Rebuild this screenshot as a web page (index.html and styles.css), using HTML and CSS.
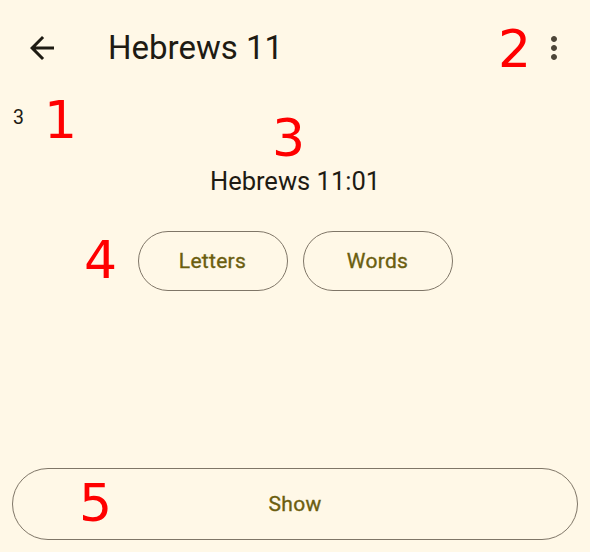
FILE: index.html
```html
<!DOCTYPE html>
<html lang="en">
<head>
<meta charset="utf-8">
<title>Hebrews 11</title>
<link rel="stylesheet" href="styles.css">
</head>
<body>
<div class="screen">
  <header class="topbar">
    <svg class="icon back" viewBox="0 0 24 24" aria-hidden="true"><path d="M20 11H7.83l5.59-5.59L12 4l-8 8 8 8 1.41-1.41L7.83 13H20v-2z"/></svg>
    <h1 class="title">Hebrews 11</h1>
    <svg class="icon more" viewBox="0 0 24 24" aria-hidden="true"><path d="M12 8c1.1 0 2-.9 2-2s-.9-2-2-2-2 .9-2 2 .9 2 2 2zm0 2c-1.1 0-2 .9-2 2s.9 2 2 2 2-.9 2-2-.9-2-2-2zm0 6c-1.1 0-2 .9-2 2s.9 2 2 2 2-.9 2-2-.9-2-2-2z"/></svg>
  </header>
  <main class="content">
    <div class="count">3</div>
    <div class="verse">Hebrews 11:01</div>
    <div class="choices">
      <button class="pill">Letters</button>
      <button class="pill">Words</button>
    </div>
  </main>
  <footer class="footer">
    <button class="pill wide">Show</button>
  </footer>
  <span class="mark m1">1</span>
  <span class="mark m2">2</span>
  <span class="mark m3">3</span>
  <span class="mark m4">4</span>
  <span class="mark m5">5</span>
</div>
</body>
</html>
```
FILE: styles.css
```css
html, body {
  margin: 0;
  padding: 0;
  background: #fff8e7;
}
body {
  font-family: Roboto, "Noto Sans", sans-serif;
  color: #1e1b13;
}
.screen {
  position: relative;
  width: 590px;
  height: 552px;
  display: flex;
  flex-direction: column;
  box-sizing: border-box;
}
.topbar {
  height: 96px;
  display: flex;
  align-items: center;
  padding: 0 18px 0 24px;
  flex: none;
}
.icon {
  width: 36px;
  height: 36px;
  flex: none;
}
.back { fill: #1e1b13; }
.more { fill: #4d4639; margin-left: auto; }
.title {
  margin: 0 0 0 48px;
  font-size: 33px;
  font-weight: 400;
  line-height: 40px;
}
.content {
  flex: 1;
  display: flex;
  flex-direction: column;
  padding: 0 12px;
}
.count {
  margin-top: 10px;
  font-size: 19.5px;
  line-height: normal;
  padding-left: 1px;
}
.verse {
  margin-top: 37px;
  text-align: center;
  font-size: 25.5px;
  line-height: normal;
}
.choices {
  margin-top: 35px;
  display: flex;
  justify-content: center;
  gap: 15px;
}
.pill {
  box-sizing: border-box;
  height: 60px;
  width: 150px;
  border: 1.5px solid #7f7667;
  border-radius: 30px;
  background: transparent;
  color: #6b5e0f;
  font-family: Roboto, "Noto Sans", sans-serif;
  font-size: 21px;
  font-weight: 400;
  -webkit-text-stroke: 0.35px currentColor;
  letter-spacing: 0.3px;
  padding: 0;
}
.footer {
  padding: 0 12px 12px;
  flex: none;
}
.pill.wide {
  width: 100%;
  height: 72px;
  border-radius: 36px;
}
.mark {
  position: absolute;
  font-family: "DejaVu Sans", sans-serif;
  font-size: 52px;
  line-height: 1;
  color: #ff0000;
}
.m1 { left: 44px; top: 94px; }
.m2 { left: 498px; top: 23px; }
.m3 { left: 272px; top: 112px; }
.m4 { left: 84px; top: 234px; }
.m5 { left: 79px; top: 477px; }
```
